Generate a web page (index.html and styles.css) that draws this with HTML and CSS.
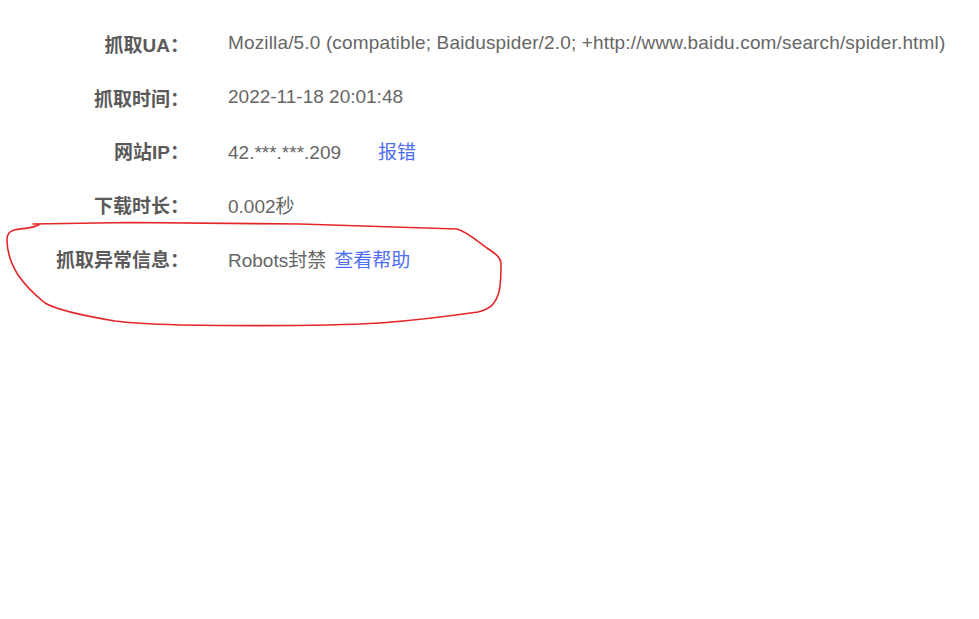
FILE: index.html
```html
<!DOCTYPE html>
<html lang="zh-CN">
<head>
<meta charset="utf-8">
<title>抓取诊断</title>
<link rel="stylesheet" href="styles.css">
</head>
<body>
<div class="page">
  <div class="info">
    <div class="row"><div class="label">抓取UA：</div><div class="value value-ua">Mozilla/5.0 (compatible; Baiduspider/2.0; +http://www.baidu.com/search/spider.html)</div></div>
    <div class="row"><div class="label">抓取时间：</div><div class="value">2022-11-18 20:01:48</div></div>
    <div class="row"><div class="label">网站IP：</div><div class="value">42.***.***.209<a class="link link-wide" href="#">报错</a></div></div>
    <div class="row"><div class="label">下载时长：</div><div class="value">0.002秒</div></div>
    <div class="row"><div class="label">抓取异常信息：</div><div class="value">Robots封禁<a class="link link-narrow" href="#">查看帮助</a></div></div>
  </div>
  <svg class="mark" width="979" height="619" viewBox="0 0 979 619" xmlns="http://www.w3.org/2000/svg">
    <path d="M33 224 L130 222.5 L300 224 L457 229 C470 233 480 244 490 250 C497 255 501 258 501 264 C501 275 501 288 498 295 C495 303 491 309 478 312 C450 316 420 320 380 323 C330 326 250 326 180 325 C150 324 130 323 115 321 C85 316 55 309 45 303 C35 295 25 285 18 275 C10 262 7 252 7 240 C7 234 10 231 14 230 C22 228 33 229 40 224"
      fill="none" stroke="#e3262a" stroke-width="1.6" stroke-linecap="round" stroke-linejoin="round"/>
  </svg>
</div>
</body>
</html>
```
FILE: styles.css
```css
html, body {
  margin: 0;
  padding: 0;
  background: #ffffff;
}
.page {
  position: relative;
  width: 979px;
  height: 619px;
  overflow: hidden;
  font-family: "Liberation Sans", "Noto Sans CJK SC", sans-serif;
  font-size: 19px;
}
.info {
  display: flex;
  flex-direction: column;
  padding-top: 16.5px;
}
.row {
  display: flex;
  align-items: center;
  height: 53.75px;
}
.label {
  width: 189px;
  flex: none;
  text-align: right;
  font-weight: bold;
  color: #5a5a5a;
}
.value {
  margin-left: 39px;
  color: #666666;
  white-space: nowrap;
}
.value-ua {
  letter-spacing: 0.15px;
}
.link {
  color: #4e6ef2;
  text-decoration: none;
}
.link-wide {
  margin-left: 37px;
}
.link-narrow {
  margin-left: 8px;
}
.mark {
  position: absolute;
  left: 0;
  top: 0;
  pointer-events: none;
}
```
